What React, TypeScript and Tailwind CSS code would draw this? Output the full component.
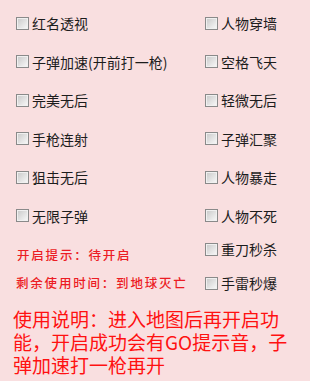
import React from "react";

const font = { fontFamily: '"Noto Sans CJK SC", "Noto Sans", sans-serif' };

function Box() {
  return (
    <span className="inline-block w-[13px] h-[13px] shrink-0 border border-[#8a8a8a] bg-gradient-to-br from-[#c8c8c8] to-[#fafafa] shadow-[inset_0_0_0_1px_#f0f0f0]" />
  );
}

function Item({ label, cls = "h-[38.5px]" }: { label: string; cls?: string }) {
  return (
    <div className={`flex items-center gap-[3px] ${cls}`}>
      <Box />
      <span className="text-[14px] leading-none text-[#1c1c1c] whitespace-nowrap">{label}</span>
    </div>
  );
}

export default function App() {
  const left = ["红名透视", "子弹加速(开前打一枪)", "完美无后", "手枪连射", "狙击无后", "无限子弹"];
  const right = ["人物穿墙", "空格飞天", "轻微无后", "子弹汇聚", "人物暴走", "人物不死"];
  return (
    <div className="w-[310px] h-[381px] bg-[#f9dfe0] overflow-hidden" style={font}>
      <div className="flex pt-[4px]">
        <div className="w-[205px] shrink-0 pl-[16px] flex flex-col">
          {left.map((l) => (
            <Item key={l} label={l} />
          ))}
          <div className="mt-[10px] h-[20px] flex items-center pl-[1px] text-[12.5px] font-medium tracking-[1.8px] text-[#ec1c24] whitespace-nowrap">
            开启提示：待开启
          </div>
          <div className="mt-[8px] h-[20px] flex items-center text-[12.5px] font-medium tracking-[1.8px] text-[#ec1c24] whitespace-nowrap">
            剩余使用时间：到地球灭亡
          </div>
        </div>
        <div className="flex flex-col">
          {right.map((l) => (
            <Item key={l} label={l} />
          ))}
          <Item label="重刀秒杀" cls="h-[34px] -mt-[3px]" />
          <Item label="手雷秒爆" cls="h-[34px]" />
        </div>
      </div>
      <div className="mt-[7px] ml-[13px] w-[280px] text-[19px] leading-[23px] text-[#ff1111]">
        使用说明：进入地图后再开启功能，开启成功会有GO提示音，子弹加速打一枪再开
      </div>
    </div>
  );
}
